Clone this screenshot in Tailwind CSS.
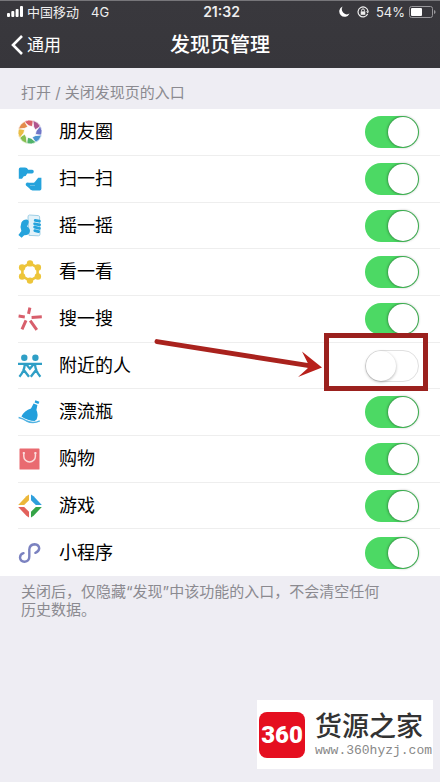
<!DOCTYPE html>
<html lang="zh-CN">
  <head>
    <meta charset="UTF-8" />
    <meta name="viewport" content="width=device-width, initial-scale=1.0" />
    <title>发现页管理</title>
    <script src="https://cdn.jsdelivr.net/npm/@tailwindcss/browser@4"></script>
  </head>
  <body class="flex min-h-screen flex-col bg-[#eeedf3] font-['Inter','Noto_Sans_CJK_SC',sans-serif] text-black">
    <header class="border-t border-[#77767a] bg-linear-to-b from-[#39383d] to-[#37363b] text-white">
      <!-- Status bar -->
      <div class="grid h-[21px] grid-cols-3 items-center pr-1 pl-[7px] text-[13px] leading-5 text-[#eeeeee]">
        <div class="flex items-center whitespace-nowrap">
          <svg class="mr-1 h-[11px] w-4" viewBox="0 0 16 11" fill="white">
            <rect x="0" y="7" width="3" height="4" rx="1" />
            <rect x="4.3" y="5" width="3" height="6" rx="1" />
            <rect x="8.6" y="3" width="3" height="8" rx="1" />
            <rect x="13" y="0" width="3" height="11" rx="1" />
          </svg>
          <span class="mr-3">中国移动</span>
          <span>4G</span>
        </div>
        <div class="text-center text-sm leading-5 font-semibold">21:32</div>
        <div class="flex items-center justify-end">
          <svg class="mr-[7px] h-[11px] w-[11px]" viewBox="0 0 11 11" fill="white">
            <path d="M3.6 0.4A5.4 5.4 0 1 0 10.6 7.6A5.2 5.2 0 0 1 3.6 0.4Z" />
          </svg>
          <svg class="mr-[7px] h-3 w-3" viewBox="0 0 12 12" fill="none" stroke="#eeeeee">
            <path d="M10.6 8A5 5 0 1 1 11 5.2" stroke-width="1.2" />
            <path d="M9 5.2H12L10.8 7.6Z" fill="#eeeeee" stroke="none" />
            <rect x="3.7" y="5.4" width="4.6" height="3.4" fill="#eeeeee" stroke="none" />
            <path d="M4.6 5.5V4.3a1.4 1.4 0 0 1 2.8 0V5.5" />
          </svg>
          <span class="mr-1">54%</span>
          <svg class="h-3 w-[27px]" viewBox="0 0 27 12">
            <rect x="0.5" y="0.5" width="23" height="11" rx="2" fill="none" stroke="#99989c" />
            <rect x="2" y="2" width="11" height="8" rx="1" fill="white" />
            <path d="M25 4Q26.6 4.5 26.6 6T25 8Z" fill="#99989c" />
          </svg>
        </div>
      </div>
      <!-- Navigation bar -->
      <nav class="grid h-[46px] grid-cols-3 items-center">
        <button type="button" class="flex items-center gap-1 pl-[11px] text-[17px] leading-6">
          <svg class="h-5 w-3" viewBox="0 0 12 20" fill="none" stroke="white" stroke-width="2.6">
            <path d="M11 1L2 10L11 19" />
          </svg>
          通用
        </button>
        <h1 class="text-center text-xl font-medium whitespace-nowrap">发现页管理</h1>
      </nav>
    </header>

    <main class="flex flex-1 flex-col">
      <h2 class="px-[21px] pt-[15px] pb-[6px] text-[15px] leading-5 text-[#8b8a90]">打开 / 关闭发现页的入口</h2>

      <ul class="bg-white text-lg">
        <li class="ml-[18px] flex h-[47px] items-center border-b border-[#eeeeee] pr-[21px]">
          <svg class="h-6 w-6" viewBox="-12 -12 24 24" stroke="white" stroke-width="0.7">
            <path d="M-6.2 -10.3A12 12 0 0 1 3.6 -11.4L2.2 -5.4L-1 -6.2Z" fill="#d9606a" />
            <path transform="rotate(45)" d="M-6.2 -10.3A12 12 0 0 1 3.6 -11.4L2.2 -5.4L-1 -6.2Z" fill="#b0558f" />
            <path transform="rotate(90)" d="M-6.2 -10.3A12 12 0 0 1 3.6 -11.4L2.2 -5.4L-1 -6.2Z" fill="#6f76c8" />
            <path transform="rotate(135)" d="M-6.2 -10.3A12 12 0 0 1 3.6 -11.4L2.2 -5.4L-1 -6.2Z" fill="#4b93cf" />
            <path transform="rotate(180)" d="M-6.2 -10.3A12 12 0 0 1 3.6 -11.4L2.2 -5.4L-1 -6.2Z" fill="#50b26a" />
            <path transform="rotate(225)" d="M-6.2 -10.3A12 12 0 0 1 3.6 -11.4L2.2 -5.4L-1 -6.2Z" fill="#86bf50" />
            <path transform="rotate(270)" d="M-6.2 -10.3A12 12 0 0 1 3.6 -11.4L2.2 -5.4L-1 -6.2Z" fill="#e9bd45" />
            <path transform="rotate(315)" d="M-6.2 -10.3A12 12 0 0 1 3.6 -11.4L2.2 -5.4L-1 -6.2Z" fill="#e48c4c" />
          </svg>
          <label for="moments" class="ml-[17px] flex-1">朋友圈</label>
          <input id="moments" type="checkbox" role="switch" checked class="h-8 w-[54px] appearance-none rounded-full bg-[#e5e5e5] p-px before:block before:h-[30px] before:w-[30px] before:rounded-full before:bg-white before:shadow-[0_0_3px_rgba(0,0,0,0.6)] checked:bg-[#4cd964] checked:before:ml-[22px]" />
        </li>
        <li class="ml-[18px] flex h-[47px] items-center border-b border-[#eeeeee] pr-[21px]">
          <svg class="h-6 w-6" viewBox="0 0 24 24" fill="#25a3dc">
            <path d="M0.8 2.2Q0.8 0.6 2.4 0.6H7Q9.2 0.6 10.2 2.8H14.2Q15.8 3 15.8 4.7Q15.6 6.4 14 6.4H9.2Q8.4 9 5.8 9.2L4 11.8H0.8Z" />
            <path d="M23.4 21.8Q23.4 23.4 21.8 23.4H14.5Q12.4 23.4 11 21L8 18.6Q7 16.8 8.6 15.8Q9.6 15.2 11 15.8H16Q17.4 14.4 18.2 13.2L20.2 10.8H23.4Z" />
            <path d="M12 18.5H17" stroke="#7cc7e8" stroke-width="0.7" />
          </svg>
          <label for="scan" class="ml-[17px] flex-1">扫一扫</label>
          <input id="scan" type="checkbox" role="switch" checked class="h-8 w-[54px] appearance-none rounded-full bg-[#e5e5e5] p-px before:block before:h-[30px] before:w-[30px] before:rounded-full before:bg-white before:shadow-[0_0_3px_rgba(0,0,0,0.6)] checked:bg-[#4cd964] checked:before:ml-[22px]" />
        </li>
        <li class="ml-[18px] flex h-[46px] items-center border-b border-[#eeeeee] pr-[21px]">
          <svg class="h-6 w-6" viewBox="0 0 24 24">
            <path d="M11.5 1L20.4 1.6Q21.6 1.8 21.6 3L22 20.2Q22 21.8 20.4 21.8L11 21.4L10 3Q10 1 11.5 1Z" fill="#e3f2f9" stroke="#9fcfe6" />
            <path d="M3.4 8.6Q5 5.4 8.4 5.4Q11.2 5.8 10.6 8.8L9.2 12.4Q12.6 14.6 11.8 18Q10.6 21.4 6.2 21.2L3.6 23.8L0.4 21L3.4 17Q1.8 12.5 3.4 8.6Z" fill="#25a3dc" />
            <path d="M17.2 6.4L21.4 7.2M16.6 9.8L21.6 10.8M16.6 13.2L21.4 14.4M16.8 16.6L20.6 17.6" stroke="#25a3dc" stroke-width="2.8" stroke-linecap="round" />
          </svg>
          <label for="shake" class="ml-[17px] flex-1">摇一摇</label>
          <input id="shake" type="checkbox" role="switch" checked class="h-8 w-[54px] appearance-none rounded-full bg-[#e5e5e5] p-px before:block before:h-[30px] before:w-[30px] before:rounded-full before:bg-white before:shadow-[0_0_3px_rgba(0,0,0,0.6)] checked:bg-[#4cd964] checked:before:ml-[22px]" />
        </li>
        <li class="ml-[18px] flex h-[47px] items-center border-b border-[#eeeeee] pr-[21px]">
          <svg class="h-6 w-6" viewBox="0 0 24 24" fill="#edc53a">
            <path d="M12 3.4L19.6 7.6V16.4L12 20.6L4.4 16.4V7.6Z" fill="none" stroke="#edc53a" stroke-width="2.6" />
            <circle cx="12" cy="3.4" r="3.2" />
            <circle cx="19.9" cy="7.5" r="3.2" />
            <circle cx="19.9" cy="16.5" r="3.2" />
            <circle cx="12" cy="20.6" r="3.2" />
            <circle cx="4.1" cy="16.5" r="3.2" />
            <circle cx="4.1" cy="7.5" r="3.2" />
          </svg>
          <label for="look" class="ml-[17px] flex-1">看一看</label>
          <input id="look" type="checkbox" role="switch" checked class="h-8 w-[54px] appearance-none rounded-full bg-[#e5e5e5] p-px before:block before:h-[30px] before:w-[30px] before:rounded-full before:bg-white before:shadow-[0_0_3px_rgba(0,0,0,0.6)] checked:bg-[#4cd964] checked:before:ml-[22px]" />
        </li>
        <li class="ml-[18px] flex h-[47px] items-center border-b border-[#eeeeee] pr-[21px]">
          <svg class="h-6 w-6" viewBox="0 0 24 24" fill="none" stroke="#d85f6c" stroke-width="3">
            <path d="M11.9 0.6L10.5 6.8M0.6 9L6.8 9.9M13.6 10.4L23.8 9.8M8 13.4L4 22.4M12.2 13.6L18.8 22.8" />
          </svg>
          <label for="search" class="ml-[17px] flex-1">搜一搜</label>
          <input id="search" type="checkbox" role="switch" checked class="h-8 w-[54px] appearance-none rounded-full bg-[#e5e5e5] p-px before:block before:h-[30px] before:w-[30px] before:rounded-full before:bg-white before:shadow-[0_0_3px_rgba(0,0,0,0.6)] checked:bg-[#4cd964] checked:before:ml-[22px]" />
        </li>
        <li class="relative ml-[18px] flex h-[46px] items-center border-b border-[#eeeeee] pr-[21px]">
          <svg class="h-6 w-6" viewBox="0 0 24 24" fill="none" stroke="#2f9fc6" stroke-width="2.3">
            <circle cx="6.3" cy="3.8" r="3.2" fill="#2f9fc6" stroke="none" />
            <circle cx="17.4" cy="3.8" r="3.2" fill="#2f9fc6" stroke="none" />
            <path d="M0 9.8H24M6.8 10Q6.5 17 1.4 22.8M5 15L11 22.8M17 10Q17.3 17 22.4 22.8M18.8 15L12.8 22.8M8 10L11.9 14.8L15.8 10" />
          </svg>
          <label for="nearby" class="ml-[17px] flex-1">附近的人</label>
          <input id="nearby" type="checkbox" role="switch" class="h-8 w-[54px] appearance-none rounded-full border border-[#e0e0e0] bg-white before:block before:h-[30px] before:w-[30px] before:rounded-full before:bg-white before:shadow-[0_1px_3px_rgba(0,0,0,0.3)] checked:bg-[#4cd964] checked:before:ml-[22px]" />
          <!-- Arrow and frame around the switch -->
          <svg class="absolute -top-1 right-[118px] h-10 w-[168px]" viewBox="0 0 168 40">
            <path d="M3 2.6L155 26.6" stroke="#a9221d" stroke-width="5" stroke-linecap="round" />
            <path d="M168 28.5L148 12.5L154.5 25.6L153.5 29.6L144 38Z" fill="#b8201b" />
          </svg>
          <div class="absolute -top-[10px] right-3 h-[58px] w-[104px] border-5 border-[#9b211e]"></div>
        </li>
        <li class="ml-[18px] flex h-[47px] items-center border-b border-[#eeeeee] pr-[21px]">
          <svg class="h-6 w-6" viewBox="0 0 24 24" fill="#239fdc">
            <path d="M17.4 0.2L21.4 1.8L20.4 4L16.6 2.6Z" />
            <path d="M15.6 3.6L19.4 5L18.4 10Q20.6 14.4 18.6 19.6L16.6 21Q10 21 3.4 16.6Q6.4 10.6 13 8.6Z" />
            <path d="M0.6 17.6Q5 18.6 8.6 21Q15.2 24 21.8 20.8" fill="none" stroke="#4fb2e2" stroke-width="1.5" />
          </svg>
          <label for="bottle" class="ml-[17px] flex-1">漂流瓶</label>
          <input id="bottle" type="checkbox" role="switch" checked class="h-8 w-[54px] appearance-none rounded-full bg-[#e5e5e5] p-px before:block before:h-[30px] before:w-[30px] before:rounded-full before:bg-white before:shadow-[0_0_3px_rgba(0,0,0,0.6)] checked:bg-[#4cd964] checked:before:ml-[22px]" />
        </li>
        <li class="ml-[18px] flex h-[47px] items-center border-b border-[#eeeeee] pr-[21px]">
          <svg class="h-6 w-6" viewBox="0 0 24 24">
            <rect x="1.5" y="1.5" width="20" height="21" rx="0.6" fill="#e96a70" />
            <path d="M5.8 6V9.2a5.8 5.8 0 0 0 11.6 0V6" fill="none" stroke="#fbdcdc" stroke-width="1.5" />
            <path d="M4.8 6H6.8M16.4 6H18.4" stroke="#fbdcdc" stroke-width="1.8" />
          </svg>
          <label for="shopping" class="ml-[17px] flex-1">购物</label>
          <input id="shopping" type="checkbox" role="switch" checked class="h-8 w-[54px] appearance-none rounded-full bg-[#e5e5e5] p-px before:block before:h-[30px] before:w-[30px] before:rounded-full before:bg-white before:shadow-[0_0_3px_rgba(0,0,0,0.6)] checked:bg-[#4cd964] checked:before:ml-[22px]" />
        </li>
        <li class="ml-[18px] flex h-[46px] items-center border-b border-[#eeeeee] pr-[21px]">
          <svg class="h-6 w-6" viewBox="0 0 24 24">
            <path d="M11 0.6V6.2L6.2 11H0.2L8.4 2.2Z" fill="#ecb73a" />
            <path d="M13 0.6V6.2L17.8 11H23.8L15.6 2.2Z" fill="#2e9fdc" />
            <path d="M0.2 13H6.2L11 17.8V23.4L8.4 21.8Z" fill="#e2615b" />
            <path d="M23.8 13H17.8L13 17.8V23.4L15.6 21.8Z" fill="#35a447" />
          </svg>
          <label for="games" class="ml-[17px] flex-1">游戏</label>
          <input id="games" type="checkbox" role="switch" checked class="h-8 w-[54px] appearance-none rounded-full bg-[#e5e5e5] p-px before:block before:h-[30px] before:w-[30px] before:rounded-full before:bg-white before:shadow-[0_0_3px_rgba(0,0,0,0.6)] checked:bg-[#4cd964] checked:before:ml-[22px]" />
        </li>
        <li class="ml-[18px] flex h-[47px] items-center pr-[21px]">
          <svg class="h-6 w-6" viewBox="0 0 24 24" fill="none" stroke="#7b82c0" stroke-width="2.4" stroke-linecap="round">
            <path d="M5.5 12.2Q2 13.2 2 16.7Q2.4 20.6 6.5 20.8Q11.3 20.3 11.3 15.5V8.5Q11.6 3.6 16.6 3.2Q21 3.6 21.2 7.4Q21 10.6 17.4 11.8" />
          </svg>
          <label for="miniapps" class="ml-[17px] flex-1">小程序</label>
          <input id="miniapps" type="checkbox" role="switch" checked class="h-8 w-[54px] appearance-none rounded-full bg-[#e5e5e5] p-px before:block before:h-[30px] before:w-[30px] before:rounded-full before:bg-white before:shadow-[0_0_3px_rgba(0,0,0,0.6)] checked:bg-[#4cd964] checked:before:ml-[22px]" />
        </li>
      </ul>

      <p class="pt-[7px] pr-[50px] pl-[21px] text-[15px] leading-[18px] text-[#8b8a90]">关闭后，仅隐藏“发现”中该功能的入口，不会清空任何历史数据。</p>

      <!-- Site badge -->
      <footer class="mt-auto mr-[7px] mb-[13px] flex h-[69px] w-44 items-center gap-[10px] self-end bg-white pl-[2px]">
        <div class="flex h-[46px] w-[46px] shrink-0 items-center justify-center rounded-lg bg-[#e50f20] font-['Roboto','Liberation_Sans',sans-serif] text-2xl font-black text-white">360</div>
        <div class="text-[#333333]">
          <div class="text-[27px] leading-8 font-medium whitespace-nowrap">货源之家</div>
          <div class="font-['Liberation_Mono',monospace] text-[13px] leading-4 text-[#888888]">www.360hyzj.com</div>
        </div>
      </footer>
    </main>
  </body>
</html>
